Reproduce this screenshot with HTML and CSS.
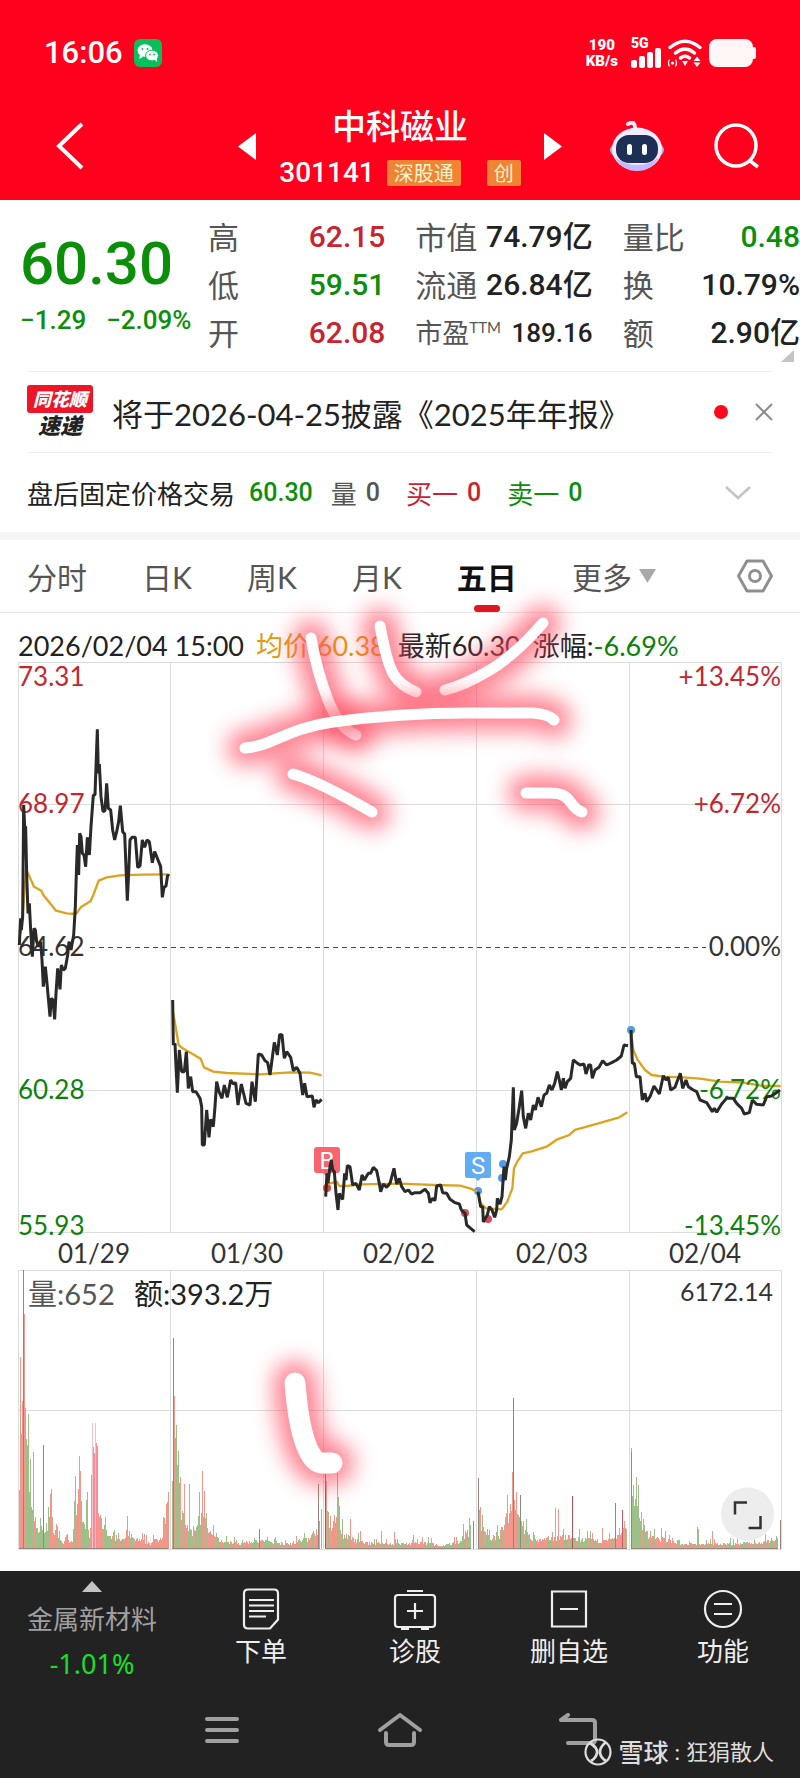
FILE: index.html
```html
<!DOCTYPE html>
<html lang="zh-CN">
<head>
<meta charset="utf-8">
<meta name="viewport" content="width=device-width, initial-scale=1">
<title>中科磁业 301141</title>
<link rel="stylesheet" href="styles.css">
</head>
<body>
<header class="top">
  <div class="status">
    <div class="status-side">
      <span class="clock">16:06</span>
      <svg class="wechat" width="28" height="28" viewBox="0 0 28 28" aria-hidden="true"><rect width="28" height="28" rx="6" fill="#06c15b"/><ellipse cx="11" cy="11.500" rx="7.500" ry="6.300" fill="#fff"/><path d="M6 16l-1 4 4-2z" fill="#fff"/><ellipse cx="18" cy="16.500" rx="6.400" ry="5.400" fill="#fff" stroke="#06c15b"/><path d="M20 20l3 3v-4z" fill="#fff"/><g fill="#06c15b"><circle cx="8.500" cy="10" r="1"/><circle cx="13.500" cy="10" r="1"/><circle cx="16" cy="15.500" r=".9"/><circle cx="20" cy="15.500" r=".9"/></g></svg>
    </div>
    <div class="status-side status-right">
      <span class="speed"><b>190</b><b>KB/s</b></span>
      <span class="signal"><b>5G</b>
        <svg width="30" height="20" viewBox="0 0 30 20" aria-hidden="true"><g fill="#fff"><rect y="12" width="6" height="8" rx="2"/><rect x="8" y="8" width="6" height="12" rx="2"/><rect x="16" y="4" width="6" height="16" rx="2"/><rect x="24" width="6" height="20" rx="2"/></g></svg>
      </span>
      <svg width="34" height="28" viewBox="0 0 34 28" aria-hidden="true"><g fill="none" stroke="#fff" stroke-width="3.500" stroke-linecap="round"><path d="M2 8.500Q17-4 32 8.500"/><path d="M7.500 14q9.500-8 19 0"/><path d="M12.500 19q4.500-3.500 9 0"/></g><path d="M14 22h6l-3 5z" fill="#fff"/><circle cx="4.500" cy="24" r="1.600" fill="#fff"/><path d="M1.500 20.500q-2 3.500 0 7M7.500 20.500q2 3.500 0 7" fill="none" stroke="#fff" stroke-width="1.300"/><path d="M25.500 22h7L29 17.500zM25.500 23.500h7L29 28z" fill="#fff"/></svg>
      <svg width="47" height="28" viewBox="0 0 47 28" aria-hidden="true"><rect width="44" height="28" rx="8" fill="#fff6f6"/><rect x="43" y="8" width="4" height="12" rx="2" fill="#fff6f6"/></svg>
    </div>
  </div>
  <div class="titlebar">
    <button class="icon-btn back" aria-label="返回"><svg width="30" height="48" viewBox="0 0 30 48"><path d="M26 2L3 24l23 22" fill="none" stroke="#fff" stroke-width="4"/></svg></button>
    <div class="switcher">
      <button class="icon-btn" aria-label="上一只"><svg width="18" height="27" viewBox="0 0 18 27"><path d="M18 0v27L0 13.500z" fill="#fff"/></svg></button>
      <div class="stock">
        <h1>中科磁业</h1>
        <p><span class="code">301141</span><span class="tag">深股通</span><span class="tag tag-gap">创</span></p>
      </div>
      <button class="icon-btn" aria-label="下一只"><svg width="18" height="27" viewBox="0 0 18 27"><path d="M0 0v27l18-13.500z" fill="#fff"/></svg></button>
    </div>
    <div class="actions">
      <button class="icon-btn" aria-label="智能助手"><svg width="54" height="50" viewBox="0 0 54 50"><path d="M18 3q8-4 7 6" fill="none" stroke="#f7e9ff" stroke-width="4" stroke-linecap="round"/><ellipse cx="27" cy="29" rx="27" ry="12" fill="#b3abf2"/><ellipse cx="27" cy="28" rx="25" ry="21.500" fill="#f1ecff"/><path d="M5 36q7 14 22 14t22-14q-9 8-22 8T5 36" fill="#c2b8fb"/><rect x="6" y="14" width="42" height="28" rx="13" fill="#1d2f55"/><rect x="17" y="23" width="5" height="11" rx="2.500" fill="#fff"/><rect x="32" y="23" width="5" height="11" rx="2.500" fill="#fff"/></svg></button>
      <button class="icon-btn" aria-label="搜索"><svg width="46" height="46" viewBox="0 0 46 46"><ellipse cx="22" cy="22.500" rx="20" ry="20.500" fill="none" stroke="#fff" stroke-width="3.500"/><path d="M35 37l9 7" stroke="#fff" stroke-width="3.500"/></svg></button>
    </div>
  </div>
</header>

<main>
  <section class="quote">
    <div class="price">
      <strong>60.30</strong>
      <p><span>−1.29</span><span>−2.09%</span></p>
    </div>
    <dl>
      <div><dt>高</dt><dd class="up">62.15</dd></div>
      <div><dt>低</dt><dd class="down">59.51</dd></div>
      <div><dt>开</dt><dd class="up">62.08</dd></div>
    </dl>
    <dl>
      <div><dt>市值</dt><dd>74.79亿</dd></div>
      <div><dt>流通</dt><dd>26.84亿</dd></div>
      <div class="small"><dt>市盈<sup>TTM</sup></dt><dd>189.16</dd></div>
    </dl>
    <dl>
      <div><dt>量比</dt><dd class="down">0.48</dd></div>
      <div><dt>换</dt><dd>10.79%</dd></div>
      <div><dt>额</dt><dd>2.90亿</dd></div>
    </dl>
    <svg class="corner" width="13" height="12" viewBox="0 0 13 12" aria-hidden="true"><path d="M13 0v12H0z" fill="#c4c4c4"/></svg>
  </section>

  <section class="notice">
    <span class="brand"><span class="brand-top">同花顺</span><span class="brand-bottom">速递</span></span>
    <a class="notice-text" href="#report">将于2026-04-25披露《2025年年报》</a>
    <span class="dot"></span>
    <button class="icon-btn" aria-label="关闭"><svg width="18" height="18" viewBox="0 0 18 18"><path d="M1 1l16 16M17 1L1 17" stroke="#8c8c8c" stroke-width="2"/></svg></button>
  </section>

  <section class="after">
    <span class="after-name">盘后固定价格交易</span>
    <b class="down">60.30</b>
    <span class="pair muted">量 <b>0</b></span>
    <span class="pair up">买一 <b>0</b></span>
    <span class="pair down">卖一 <b>0</b></span>
    <button class="icon-btn more" aria-label="展开"><svg width="26" height="14" viewBox="0 0 26 14"><path d="M1 1l12 11L25 1" fill="none" stroke="#c4c4c4" stroke-width="2.500"/></svg></button>
  </section>

  <nav class="tabs" aria-label="周期">
    <button>分时</button><button>日K</button><button>周K</button><button>月K</button><button class="active">五日</button><button>更多<svg width="17" height="14" viewBox="0 0 17 14" aria-hidden="true"><path d="M0 0h17L8.500 14z" fill="#a9a9a9"/></svg></button>
    <button class="gear" aria-label="设置"><svg width="36" height="34" viewBox="0 0 36 34"><path d="M10 2h16l8.500 15L26 32H10L1.500 17z" fill="none" stroke="#8f8f8f" stroke-width="3" stroke-linejoin="round"/><circle cx="18" cy="17" r="5.500" fill="none" stroke="#8f8f8f" stroke-width="3"/></svg></button>
  </nav>

  <section class="chart">
    <p class="readout"><span>2026/02/04 15:00</span><span class="avg">均价:60.38</span><span>最新60.30</span><span>涨幅:<em>-6.69%</em></span></p>
    <svg class="plot" viewBox="0 0 800 911" role="img" aria-label="五日走势">
      <g class="grid">
        <path d="M18.500 2.500h763v570h-763zM18.500 144.500h763M18.500 430.500h763M170.500 2.500v570M323.500 2.500v570M476.500 2.500v570M629.500 2.500v570"/>
        <path d="M18.500 610.500h763v279h-763zM18.500 750.500h763M170.500 610.500v279M323.500 610.500v279M476.500 610.500v279M629.500 610.500v279"/>
      </g>
      <path d="M90 287.500h616" stroke="#444" stroke-dasharray="5 4"/>
      <g class="trades">
        <path d="M317 487h20q3 0 3 3v20q0 3-3 3h-8l-3 3-3-3h-6q-3 0-3-3v-20q0-3 3-3z" fill="#f8656e"/>
        <path d="M467 492h22q2 0 2 2v22q0 2-2 2h-8l-3 3-3-3h-8q-2 0-2-2v-22q0-2 2-2z" fill="#62acf3"/>
        <text x="327" y="509" class="flag">B</text><text x="478" y="514" class="flag">S</text>
        <g fill="#ea4335"><circle cx="327" cy="528" r="4"/></g>
        <g fill="#dd4a5c"><circle cx="465" cy="553" r="4"/><circle cx="488" cy="559" r="4"/></g>
        <g fill="#4f9bea"><circle cx="478" cy="531" r="4"/><circle cx="503" cy="504" r="4"/><circle cx="502" cy="518" r="4"/><circle cx="631" cy="370" r="4"/></g>
      </g>
      <g class="avg-line">
        <polyline transform="translate(0 -20) scale(.33333)" points="62,880 70,800 78,690 84,700 102,740 124,752 130,765 150,790 168,812 200,820 228,822 242,802 272,783 280,765 296,722 320,712 360,706 430,704 505,703"/>
        <g transform="translate(0 320) scale(.33333)">
          <polyline points="520,100 536,195 548,205 602,236 612,262 640,275 680,279 780,283 870,277 930,278 965,286"/>
          <polyline points="985,612 1010,605 1018,618 1040,618 1080,613 1200,611 1300,615 1380,617 1410,625 1430,634"/>
        </g>
        <g transform="translate(400 320) scale(.33333)">
          <polyline points="236,640 242,670 258,685 305,688 322,665 337,625 342,565 352,545 368,520 395,514 440,500 472,478 508,465 525,450 590,432 658,412 682,397"/>
          <polyline points="693,155 700,210 712,238 735,270 755,285 790,290 850,292 900,296 960,305 1030,308 1090,318 1142,318"/>
        </g>
      </g>
      <g class="labels">
        <g fill="#c4252f"><text x="18" y="26">73.31</text><text x="18" y="153">68.97</text><text x="781" y="26" class="end">+13.45%</text><text x="781" y="153" class="end">+6.72%</text></g>
        <g fill="#333"><text x="18" y="296">64.62</text><text x="781" y="296" class="end">0.00%</text></g>
        <g fill="#0b820b"><text x="18" y="439">60.28</text><text x="18" y="575">55.93</text><text x="781" y="439" class="end">-6.72%</text><text x="781" y="575" class="end">-13.45%</text></g>
        <g fill="#333" class="dates"><text x="94" y="603">01/29</text><text x="247" y="603">01/30</text><text x="399" y="603">02/02</text><text x="552" y="603">02/03</text><text x="705" y="603">02/04</text></g>
      </g>
      <g class="price-line">
        <polyline transform="translate(0 -20) scale(.33333)" points="58,915 62,835 64,870 68,830 71,495 74,560 77,560 80,700 84,820 88,790 92,870 97,950 102,865 106,870 110,905 116,920 122,905 126,960 130,1040 136,980 141,1030 150,1130 154,1075 159,1080 164,1138 168,1060 173,985 180,1048 184,975 190,990 196,985 203,945 207,905 213,930 221,885 226,800 229,700 232,615 236,705 239,580 243,590 247,640 252,645 257,680 262,592 268,645 273,560 280,465 285,465 292,268 295,400 298,372 303,470 309,515 315,512 320,430 325,505 332,510 338,570 344,600 350,575 356,545 361,497 368,575 374,582 382,782 386,700 390,600 396,592 406,592 413,682 420,678 427,600 434,622 441,600 448,605 457,668 464,635 470,650 482,680 487,772 492,742 498,738 503,705 508,708"/>
        <g transform="translate(0 320) scale(.33333)">
          <polyline points="518,60 520,195 525,190 528,260 532,338 538,210 545,275 553,275 559,215 565,325 572,290 578,335 588,335 600,355 605,380 607,495 613,495 620,390 627,472 632,418 640,440 645,380 650,305 657,335 666,355 673,315 682,352 692,300 700,312 707,308 714,375 724,312 732,345 738,370 750,375 756,305 766,365 775,222 785,225 795,242 803,248 810,285 818,225 823,187 832,225 839,163 846,165 853,235 860,215 872,232 880,272 890,262 900,280 908,345 914,310 921,350 937,348 942,382 948,360 955,368 965,358"/>
          <polyline points="977,650 981,580 984,610 990,560 994,540 998,570 1003,575 1008,640 1014,690 1018,640 1022,650 1028,658 1034,580 1038,600 1042,557 1050,560 1058,615 1068,610 1078,630 1086,585 1093,600 1105,580 1112,580 1120,562 1130,572 1138,610 1142,635 1150,612 1160,622 1170,610 1182,565 1190,612 1198,595 1205,620 1215,635 1225,630 1235,642 1245,638 1260,638 1275,628 1285,640 1290,668 1298,655 1305,662 1310,618 1322,615 1328,638 1340,640 1350,658 1365,668 1378,672 1384,690 1395,700 1400,735 1412,745 1424,755"/>
        </g>
        <g transform="translate(400 320) scale(.33333)">
          <polyline points="234,635 242,680 248,680 250,726 262,705 268,680 276,690 284,712 290,690 292,655 300,672 306,650 312,560 316,600 320,565 328,530 334,480 340,322 343,450 350,430 358,380 365,332 370,410 377,445 385,400 392,420 400,375 406,390 414,352 424,380 432,345 440,340 448,315 456,330 464,310 472,275 478,300 484,330 490,295 495,325 502,305 512,295 520,240 530,248 540,255 552,252 558,282 566,255 572,255 577,295 585,270 597,262 608,242 620,255 635,248 650,240 664,228 672,195 684,197"/>
          <polyline points="693,150 697,250 703,250 709,290 720,290 727,360 735,340 740,365 750,350 762,318 770,330 778,342 790,287 798,300 805,292 812,330 825,322 833,300 841,280 848,325 858,300 865,320 880,330 890,335 900,360 920,368 937,395 943,385 950,397 965,372 980,355 1000,355 1010,370 1025,385 1033,402 1048,398 1057,360 1070,373 1090,375 1100,350 1115,348 1140,330"/>
        </g>
      </g>
      <g id="volume"></g>
      <g class="volume-labels"><text x="28" y="645" fill="#555">量:652</text><text x="134" y="645" fill="#222">额:393.2万</text><text x="773" y="641" class="max" fill="#333">6172.14</text></g>
      <g class="expand"><circle cx="747.500" cy="854" r="26.500" fill="#ededed"/><path d="M747 842.500h-12v12M760.500 856v12h-12" fill="none" stroke="#333" stroke-width="2.500"/></g>
      <defs><filter id="halo" filterUnits="userSpaceOnUse" x="150" y="-120" width="560" height="1000"><feGaussianBlur stdDeviation="11"/></filter></defs>
      <g class="scribble">
        <g class="glow"><path d="M311-22Q317 12 328 40T356 75"/><path d="M380-34Q387 4 394 15T416 32"/><path d="M543-37Q515-5 490 10T445 30"/></g>
        <g class="ink"><path d="M311-22Q317 12 328 40T356 75"/><path d="M380-34Q387 4 394 15T416 32"/><path d="M543-37Q515-5 490 10T445 30"/></g>
        <g class="glow"><path d="M245 88C272 86 288 68 333 62S420 53 467 53H533Q548 54 554 60"/><path d="M293 114Q318 121 372 152"/><path d="M526 133H550C574 133 568 148 582 152"/><path class="thick" d="M295 723C299 775 309 803 322 803H332"/></g>
        <g class="ink"><path d="M245 88C272 86 288 68 333 62S420 53 467 53H533Q548 54 554 60"/><path d="M293 114Q318 121 372 152"/><path d="M526 133H550C574 133 568 148 582 152"/><path class="thick" d="M295 723C299 775 309 803 322 803H332"/></g>
      </g>
    </svg>
  </section>
</main>

<footer class="bottom">
  <div class="dock">
    <button class="sector"><svg width="20" height="11" viewBox="0 0 20 11" aria-hidden="true"><path d="M10 0l10 11H0z" fill="#c4c4c4"/></svg><span>金属新材料</span><b>-1.01%</b></button>
    <button><svg width="38" height="42" viewBox="0 0 38 42" aria-hidden="true"><path d="M6 1.500h26q4 0 4 4v26l-8 9H6q-4 0-4-4v-31q0-4 4-4zM7 12h25M7 17.500h25M7 23h25M7 28.500h17" fill="none" stroke="#eee" stroke-width="2.200"/></svg><span>下单</span></button>
    <button><svg width="44" height="42" viewBox="0 0 44 42" aria-hidden="true"><path d="M14 3h16M5 7h34q3 0 3 3v26q0 3-3 3H5q-3 0-3-3V10q0-3 3-3zM22 15v16M14 23h16M8 41h8M28 41h8" fill="none" stroke="#eee" stroke-width="2.200"/></svg><span>诊股</span></button>
    <button><svg width="38" height="42" viewBox="0 0 38 42" aria-hidden="true"><path d="M2 3.500h34v35H2zM10 21h18" fill="none" stroke="#eee" stroke-width="2.200"/></svg><span>删自选</span></button>
    <button><svg width="40" height="42" viewBox="0 0 40 42" aria-hidden="true"><circle cx="20" cy="21" r="18" fill="none" stroke="#eee" stroke-width="2.200"/><path d="M11 16h18M11 26h18" stroke="#eee" stroke-width="2.200"/></svg><span>功能</span></button>
  </div>
  <div class="system">
    <button class="icon-btn" aria-label="最近任务"><svg width="34" height="34" viewBox="0 0 34 34"><path d="M2 6h30M2 17h30M2 28h30" stroke="#a0a0a0" stroke-width="4" stroke-linecap="round"/></svg></button>
    <button class="icon-btn" aria-label="主页"><svg width="44" height="34" viewBox="0 0 44 34"><path d="M2 17L22 2l20 15M8 20v9q0 3 3 3h22q3 0 3-3v-9" fill="none" stroke="#a0a0a0" stroke-width="4" stroke-linecap="round" stroke-linejoin="round"/></svg></button>
    <button class="icon-btn" aria-label="后退"><svg width="38" height="34" viewBox="0 0 38 34"><path d="M9 2L2 7h31q3 0 3 3v17q0 3-3 3H9" fill="none" stroke="#a0a0a0" stroke-width="4" stroke-linecap="round" stroke-linejoin="round"/></svg></button>
  </div>
  <div class="credit"><svg width="28" height="28" viewBox="0 0 28 28" aria-hidden="true"><circle cx="14" cy="14" r="12.500" fill="none" stroke="#ddd" stroke-width="2.200"/><path d="M6 5q8 5 7 10T7 23M22 4q-7 6-6 11t6 8" fill="none" stroke="#ddd" stroke-width="2.800"/></svg><b>雪球</b><span>:</span><span>狂狷散人</span></div>
</footer>
<script src="volume.js"></script>
</body>
</html>
```
FILE: styles.css
```css
* { box-sizing: border-box; }
body {
  margin: 0;
  background: #fff;
  color: #222;
  font-family: Lato, "Noto Sans CJK SC", sans-serif;
}
button {
  padding: 0;
  border: 0;
  background: none;
  color: inherit;
  font: inherit;
}
svg { display: block; }
h1, p, dl, dd { margin: 0; }
.icon-btn { display: flex; }
.up { color: #c8232f; }
.down { color: #0b8f0b; }
.muted { color: #555; }

.top { background: #ff001d; color: #fff; }
.status {
  display: flex;
  justify-content: space-between;
  align-items: center;
  height: 106px;
  padding: 0 44px;
}
.status-side { display: flex; align-items: center; gap: 11px; }
.status-right { gap: 7px; }
.clock { font: 500 31px/40px Roboto, sans-serif; }
.speed, .signal {
  display: flex;
  flex-direction: column;
  font: 700 15px/16px Roboto, sans-serif;
}
.speed { align-items: center; margin-right: 6px; }
.signal { font-size: 14px; line-height: 10px; }

.titlebar {
  display: grid;
  grid-template-columns: 1fr 324px 1fr;
  align-items: center;
  padding-bottom: 14px;
}
.back { margin-left: 56px; }
.switcher { display: flex; justify-content: space-between; align-items: center; }
.stock { text-align: center; }
.stock h1 { font-size: 34px; font-weight: 500; line-height: 40px; }
.stock p { display: flex; align-items: center; margin-top: 14px; }
.code { margin-right: 12px; font: 500 28px/26px Roboto, sans-serif; }
.tag {
  padding: 0 7px;
  border-radius: 2px;
  background: #f08433;
  color: #fff3d0;
  font-size: 20px;
  line-height: 26px;
}
.tag-gap { margin-left: 26px; }
.actions { display: flex; justify-content: flex-end; align-items: center; gap: 50px; padding-right: 40px; }

.quote {
  position: relative;
  display: grid;
  grid-template-columns: 158px 1fr 1fr 1fr;
  column-gap: 30px;
  padding: 13px 0 14px 20px;
}
.price { color: #0b8f0b; font-family: Roboto, sans-serif; white-space: nowrap; }
.price strong { display: block; padding-top: 17px; font-size: 60px; font-weight: 500; line-height: 68px; }
.price p { display: flex; gap: 20px; margin-top: 6px; font-size: 26px; font-weight: 500; line-height: 32px; }
.quote dl > div {
  display: flex;
  justify-content: space-between;
  align-items: center;
  height: 48px;
  white-space: nowrap;
}
.quote dt { color: #555; font-size: 31px; line-height: 48px; }
.quote dd { font: 500 30px/48px Roboto, "Noto Sans CJK SC", sans-serif; }
.quote .small dt { font-size: 27px; }
.quote .small dd { font-size: 26px; }
.quote sup { font-size: 15px; line-height: 1; }
.corner { position: absolute; right: 6px; bottom: 9px; }

.notice, .after {
  display: flex;
  align-items: center;
  margin: 0 27px;
  border-top: 1px solid #ededed;
}
.notice { height: 81px; }
.brand {
  display: flex;
  flex-direction: column;
  align-items: center;
  width: 66px;
  font-weight: 900;
  font-style: italic;
}
.brand-top {
  align-self: stretch;
  border-radius: 3px;
  background: #ee1626;
  color: #fff;
  font-size: 18px;
  line-height: 28px;
  text-align: center;
}
.brand-bottom { font-size: 22px; line-height: 26px; }
.notice-text { margin-left: 19px; color: #222; font-size: 31px; text-decoration: none; white-space: nowrap; }
.dot { width: 14px; height: 14px; margin: 0 27px 0 auto; border-radius: 50%; background: #ff0a1c; }
.after { height: 80px; font-size: 26px; }
.after b { font: 500 25px/32px Roboto, sans-serif; }
.after-name { margin-right: 14px; }
.pair { display: flex; align-items: center; gap: 9px; margin-left: 18px; }
.pair + .pair { margin-left: 26px; }
.more { margin-left: auto; margin-right: 22px; }

.tabs {
  display: flex;
  align-items: center;
  justify-content: space-between;
  height: 81px;
  padding: 0 27px;
  border-top: 8px solid #f5f5f5;
  border-bottom: 1px solid #e6e6e6;
  color: #555;
  font-size: 30px;
}
.tabs button { display: flex; align-items: center; gap: 7px; height: 72px; }
.tabs .active {
  position: relative;
  color: #111;
  font-weight: 700;
}
.tabs .active::after {
  content: "";
  position: absolute;
  left: 50%;
  bottom: 0;
  width: 26px;
  height: 7px;
  margin-left: -13px;
  border-radius: 4px;
  background: #e01522;
}
.tabs .gear { margin-left: 26px; }

.readout {
  display: flex;
  gap: 12px;
  height: 47px;
  padding: 9px 18px 0;
  font-size: 27px;
  line-height: 48px;
  white-space: nowrap;
}
.readout em { color: #0b820b; font-style: normal; }
.avg { color: #e39a0c; }
.plot { width: 100%; height: auto; overflow: visible; }
.grid { fill: none; stroke: #dcdcdc; }
.labels { font-size: 26px; }
.end, .max { text-anchor: end; }
.dates { text-anchor: middle; }
.flag { fill: #fff; font: 400 24px Roboto, sans-serif; text-anchor: middle; }
.volume-labels { font-size: 29px; }
.volume-labels .max { font-size: 25px; }
.avg-line { fill: none; stroke: #dda21f; stroke-width: 7; stroke-linejoin: round; }
.price-line { fill: none; stroke: #292929; stroke-width: 9; stroke-linejoin: bevel; }
.glow { fill: none; stroke: #ff4a60; stroke-width: 36; stroke-linecap: round; opacity: .68; filter: url(#halo); }
.glow .thick { stroke-width: 44; }
.ink { fill: none; stroke: #fff; stroke-width: 11; stroke-linecap: round; }
.ink .thick { stroke-width: 21; }

.bottom {
  position: relative;
  padding-bottom: 10px;
  background: #222;
  color: #eee;
}
.dock { display: grid; grid-template-columns: 184fr 154fr 154fr 154fr 154fr; }
.dock button {
  display: flex;
  flex-direction: column;
  align-items: center;
  gap: 3px;
  padding-top: 17px;
  font-size: 26px;
  line-height: 36px;
}
.dock .sector { gap: 9px; padding-top: 10px; color: #a0a0a0; }
.sector b { color: #16e02a; font: 400 27px/36px "Noto Sans", sans-serif; }
.system { display: grid; grid-template-columns: repeat(3, 1fr); padding: 31px 133px 21px; justify-items: center; }
.credit {
  position: absolute;
  right: 26px;
  bottom: 9px;
  display: flex;
  align-items: center;
  gap: 6px;
  color: #ddd;
  font-size: 22px;
  line-height: 34px;
}
.credit b { font-size: 25px; font-weight: 500; }
```
FILE: volume.js
```js
const BASE = 889;
const RED = '#f0988c';
const GREEN = '#9cc088';
const DARK = '#95857c';

// Each session: [x, typical height, share of rising bars], then single peaks.
const sessions = [
  {
    shape: [[19, 45, .9], [20, 130, .9], [22, 170, .9], [24, 190, .6], [26, 110, .2], [28, 85, .1], [30, 60, .3], [33, 36, .7], [38, 22, .4], [45, 22, .3], [50, 38, .1], [55, 20, .6], [60, 9, .8], [72, 8, .8], [75, 45, .7], [79, 60, .8], [83, 38, .2], [89, 18, .3], [92, 60, 1], [94, 105, 1], [96, 95, 1], [98, 55, .9], [101, 28, .3], [110, 12, .4], [124, 9, .7], [127, 22, .7], [132, 12, .7], [150, 7, .8], [160, 12, .7], [168, 36, .8]],
    peaks: [[20, 192, RED], [23, 279, DARK], [24, 235, RED], [25, 125, RED], [30, 90, GREEN], [33, 97, RED], [43, 104, DARK], [50, 55, RED], [79, 93, RED], [80, 78, RED], [87, 57, GREEN], [92, 126, '#f2c3cf'], [95, 126, '#f2c3cf'], [93, 102, '#fb8b94'], [94, 96, '#fb8b94'], [96, 106, '#fb8b94'], [127, 33, GREEN], [166, 45, RED], [168, 57, RED]]
  },
  {
    shape: [[172, 90, 0], [174, 130, 0], [176, 90, 0], [178, 85, .1], [180, 45, .5], [185, 28, .4], [192, 20, .5], [198, 32, .1], [202, 38, .6], [208, 18, .6], [220, 9, .6], [240, 6, .6], [260, 9, .6], [290, 6, .6], [310, 13, .4], [320, 28, .3]],
    peaks: [[173, 211, DARK], [174, 153, RED], [176, 124, GREEN], [178, 98, GREEN], [180, 72, RED], [184, 65, RED], [189, 65, GREEN], [199, 57, GREEN], [202, 78, RED], [204, 58, RED], [259, 20, DARK], [318, 65, DARK], [321, 40, GREEN]]
  },
  {
    shape: [[325, 65, .9], [327, 42, .8], [332, 22, .8], [337, 48, .3], [341, 18, .5], [350, 12, .7], [365, 7, .6], [390, 6, .5], [430, 7, .6], [440, 3, .4], [458, 8, .3], [471, 24, .2]],
    peaks: [[325, 75, '#a05a50'], [326, 68, RED], [337, 75, GREEN], [338, 52, GREEN], [350, 30, RED], [360, 18, RED], [381, 18, RED], [394, 17, RED], [413, 14, RED], [463, 25, GREEN], [473, 28, DARK]]
  },
  {
    shape: [[478, 60, .5], [481, 30, .5], [490, 12, .4], [499, 14, .8], [507, 40, .9], [512, 55, .9], [514, 60, .9], [520, 42, .6], [525, 18, .3], [535, 9, .8], [560, 14, .6], [590, 10, .6], [605, 9, .7], [615, 11, .8], [623, 28, .9], [627, 24, .6]],
    peaks: [[478, 71, DARK], [482, 34, GREEN], [507, 54, RED], [512, 77, RED], [513, 151, DARK], [520, 54, DARK], [555, 41, RED], [558, 40, RED], [572, 53, '#b5505a'], [602, 21, RED], [615, 46, DARK], [622, 39, '#cc5a62']]
  },
  {
    shape: [[631, 75, 0], [635, 50, 0], [642, 28, .4], [650, 13, .8], [665, 11, .8], [680, 5, .5], [720, 6, .4], [760, 7, .6], [778, 14, .8]],
    peaks: [[631, 97, DARK], [635, 50, GREEN], [636, 72, GREEN], [641, 37, RED], [643, 30, RED], [697, 22, GREEN], [698, 20, GREEN], [712, 18, RED], [765, 15, RED], [780, 29, DARK]]
  }
];

let seed = 7;
function random() {
  seed = (seed * 16807) % 2147483647;
  return seed / 2147483647;
}

const layer = document.getElementById('volume');
function bar(x, height, color, width) {
  const rect = document.createElementNS('http://www.w3.org/2000/svg', 'rect');
  rect.setAttribute('x', x);
  rect.setAttribute('y', BASE - height);
  rect.setAttribute('width', width);
  rect.setAttribute('height', height);
  rect.setAttribute('fill', color);
  layer.appendChild(rect);
}

for (const { shape, peaks } of sessions) {
  for (let i = 1; i < shape.length; i++) {
    const [x0, h0, r0] = shape[i - 1];
    const [x1, h1, r1] = shape[i];
    for (let x = x0; x < x1; x++) {
      const t = (x - x0) / (x1 - x0);
      const noise = .6 + .5 * random() + (random() > .85 ? .7 : 0);
      const height = Math.max(2, Math.round((h0 + (h1 - h0) * t) * noise));
      bar(x, height, random() < r0 + (r1 - r0) * t ? RED : GREEN, 1);
    }
  }
  for (const [x, height, color] of peaks) bar(x, height, color, 1);
  bar(shape[0][0], 1, DARK, shape[shape.length - 1][0] - shape[0][0]);
}
```
